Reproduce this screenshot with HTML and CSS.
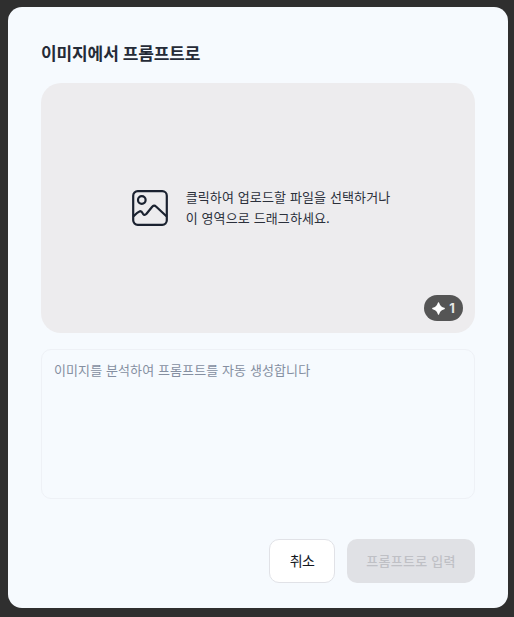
FILE: index.html
```html
<!DOCTYPE html>
<html lang="ko">
<head>
    <meta charset="UTF-8">
    <meta name="viewport" content="width=device-width, initial-scale=1.0">
    <title>이미지에서 프롬프트로</title>
    <link rel="stylesheet" href="styles.css">
</head>
<body>
    <div class="modal">
        <h2 class="title">이미지에서 프롬프트로</h2>

        <div class="dropzone">
            <div class="drop-content">
                <svg class="drop-icon" width="38" height="38" viewBox="0 0 38 38" fill="none" stroke="#1b2230" stroke-width="2.2" stroke-linecap="round" stroke-linejoin="round">
                    <rect x="2.2" y="2.2" width="33.6" height="33.6" rx="4.5"/>
                    <circle cx="10.8" cy="11" r="3.8"/>
                    <path d="M2.8 27 Q6.5 23 9 22.2 Q10.5 22 12 24.8 Q13.5 27 15.5 24.8 L21 18 Q23 15.5 25 17.5 L35.2 27"/>
                </svg>
                <p class="drop-text">클릭하여 업로드할 파일을 선택하거나<br>이 영역으로 드래그하세요.</p>
            </div>
            <div class="credit-badge">
                <svg width="13" height="13" viewBox="0 0 13 13"><path fill="#fff" d="M6.5 0.8 C7.2 3.8 8.8 5.6 12.2 6.5 C8.8 7.4 7.2 9.2 6.5 12.2 C5.8 9.2 4.2 7.4 0.8 6.5 C4.2 5.6 5.8 3.8 6.5 0.8 Z" stroke="#fff" stroke-width="1.3" stroke-linejoin="round"/></svg>
                <span>1</span>
            </div>
        </div>

        <textarea class="prompt-input" placeholder="이미지를 분석하여 프롬프트를 자동 생성합니다"></textarea>

        <div class="actions">
            <button type="button" class="btn btn-cancel">취소</button>
            <button type="button" class="btn btn-submit" disabled>프롬프트로 입력</button>
        </div>
    </div>
</body>
</html>
```

FILE: styles.css
```css
* {
    margin: 0;
    padding: 0;
    box-sizing: border-box;
    font-family: Inter, "Noto Sans CJK KR", sans-serif;
}

body {
    background: #2f2f2f;
    width: 514px;
    height: 617px;
    overflow: hidden;
    padding: 7px 6px 9px 8px;
}

.modal {
    background: #f6fafe;
    width: 500px;
    height: 601px;
    border-radius: 14px;
    padding: 33px 33px 25px;
    display: flex;
    flex-direction: column;
}

.title {
    font-size: 17px;
    line-height: 28px;
    font-weight: 700;
    letter-spacing: -0.1px;
    color: #252b37;
    margin-bottom: 15px;
}

.dropzone {
    position: relative;
    height: 250px;
    background: #edecee;
    border-radius: 20px;
    display: flex;
    justify-content: center;
    align-items: center;
    flex-shrink: 0;
}

.drop-content {
    display: flex;
    align-items: center;
    gap: 17px;
    margin-top: -1px;
    margin-left: 5px;
}

.drop-text {
    font-size: 13px;
    line-height: 21px;
    letter-spacing: 0.12px;
    color: #2b303b;
}

.credit-badge {
    position: absolute;
    right: 12px;
    bottom: 12px;
    width: 39px;
    height: 26px;
    border-radius: 13px;
    background: #555555;
    color: #e6e6e6;
    display: flex;
    align-items: center;
    justify-content: center;
    gap: 4px;
    font-size: 13px;
    font-weight: 700;
}

.prompt-input {
    display: block;
    width: 100%;
    height: 150px;
    flex-shrink: 0;
    margin-top: 16px;
    padding: 11px 12px;
    background: transparent;
    border: 1px solid #eef1f6;
    border-radius: 10px;
    font-size: 13px;
    line-height: 18px;
    letter-spacing: 0.1px;
    color: #2b303b;
    resize: none;
    outline: none;
}

.prompt-input::placeholder {
    color: #858fa1;
    opacity: 1;
}

.actions {
    display: flex;
    justify-content: flex-end;
    gap: 12px;
    margin-top: 40px;
}

.btn {
    height: 44px;
    border-radius: 10px;
    font-size: 13px;
    letter-spacing: 0.3px;
    padding-bottom: 2px;
}

.btn-cancel {
    width: 66px;
    background: #ffffff;
    border: 1px solid #e1e2e7;
    color: #14181f;
    font-size: 14px;
    letter-spacing: -0.6px;
}

.btn-submit {
    width: 128px;
    background: #e0e1e5;
    border: none;
    color: #bfc0c5;
    font-weight: 500;
}
```
